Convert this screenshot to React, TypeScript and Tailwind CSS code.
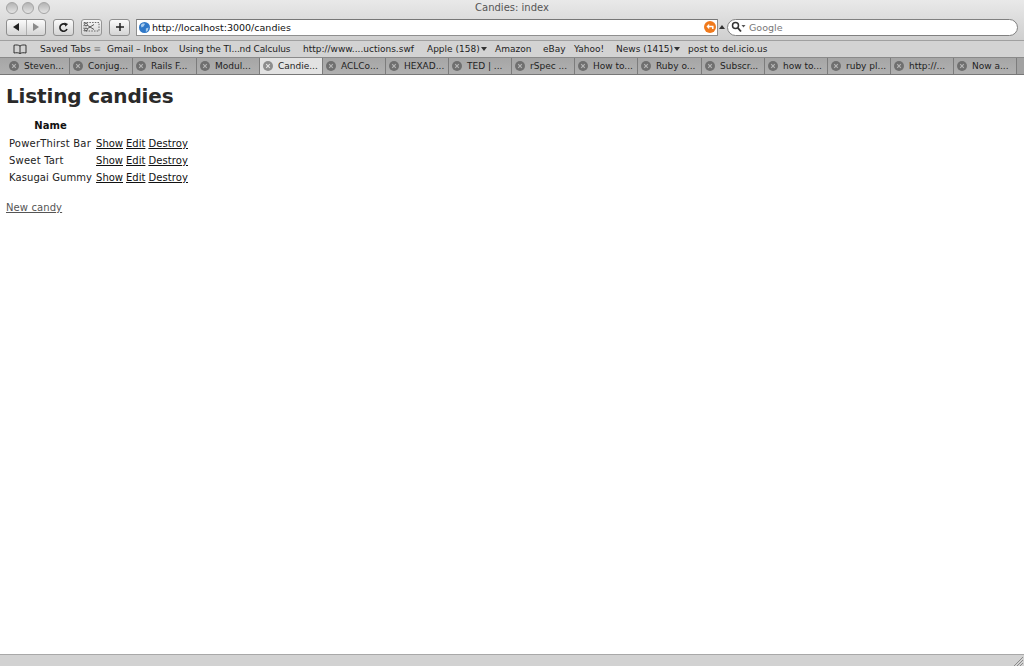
const uiFont = "font-['DejaVu_Sans','Liberation_Sans',sans-serif]";

const bookmarks = [
  { label: "Gmail – Inbox", w: "w-[72px]" },
  { label: "Using the TI...nd Calculus", w: "w-[124px] tracking-[-0.12px]" },
  { label: "http://www....uctions.swf", w: "w-[124px]" },
  { label: "Apple (158)", w: "w-[68px]", menu: true },
  { label: "Amazon", w: "w-[48px]" },
  { label: "eBay", w: "w-[31px]" },
  { label: "Yahoo!", w: "w-[42px]" },
  { label: "News (1415)", w: "w-[72px]", menu: true },
  { label: "post to del.icio.us", w: "w-[90px]" },
];

const tabs = [
  "Steven...", "Conjug...", "Rails F...", "Modul...", "Candie...", "ACLCo...", "HEXAD...", "TED | ...",
  "rSpec ...", "How to...", "Ruby o...", "Subscr...", "how to...", "ruby pl...", "http://...", "Now a...",
];

const candies = [
  { name: "PowerThirst Bar", spacing: "tracking-[0.2px]" },
  { name: "Sweet Tart", spacing: "tracking-[0.2px]" },
  { name: "Kasugai Gummy", spacing: "tracking-[0.08px]" },
];

function Light() {
  return <span className="w-[12px] h-[12px] rounded-full bg-gradient-to-b from-[#b4b4b4] to-[#e4e4e4] border border-[#a4a4a4]" />;
}

function ToolButton({ className, children }: { className: string; children: React.ReactNode }) {
  return (
    <div className={`h-[17px] shrink-0 flex items-center justify-center rounded-[3px] border border-[#8e8e8e] bg-gradient-to-b from-[#fbfbfb] to-[#d4d4d4] ${className}`}>
      {children}
    </div>
  );
}

function TabClose({ dark }: { dark?: boolean }) {
  return (
    <svg width="10" height="10" viewBox="0 0 10 10" className="shrink-0">
      <circle cx="5" cy="5" r="5" fill={dark ? "#6f6f6f" : "#8d8d8d"} />
      <path d="M3.2 3.2l3.6 3.6M6.8 3.2l-3.6 3.6" stroke={dark ? "#b5b5b5" : "#e2e2e2"} strokeWidth="1.2" />
    </svg>
  );
}

export default function App() {
  return (
    <div className={`w-[1024px] h-[666px] flex flex-col overflow-hidden bg-white ${uiFont}`}>
      {/* Title bar and toolbar */}
      <div className="h-[41px] shrink-0 bg-gradient-to-b from-[#e9e9e9] to-[#cfcfcf] border-b border-[#a0a0a0]">
        <div className="h-[16px] relative flex items-center pl-[6px] gap-[4px]">
          <Light />
          <Light />
          <Light />
          <span className="absolute left-0 right-0 text-center text-[10px] leading-[16px] text-[#555]">Candies: index</span>
        </div>
        <div className="h-[22px] flex items-center pl-[6px] pr-[6px]">
          <ToolButton className="w-[40px] mr-[7px]">
            <div className="flex-1 h-full flex items-center justify-center border-r border-[#b0b0b0]">
              <svg width="8" height="8" viewBox="0 0 8 8"><path d="M1 4l6-4v8z" fill="#222" /></svg>
            </div>
            <div className="flex-1 flex items-center justify-center">
              <svg width="8" height="8" viewBox="0 0 8 8"><path d="M7 4L1 0v8z" fill="#8a8a8a" /></svg>
            </div>
          </ToolButton>
          <ToolButton className="w-[21px] mr-[7px]">
            <svg width="11" height="11" viewBox="0 0 12 12" fill="none">
              <path d="M9.8 7.6A4 4 0 1 1 8.6 2.9" stroke="#222" strokeWidth="1.8" />
              <path d="M7 0.5l4 1.8-3 3z" fill="#222" />
            </svg>
          </ToolButton>
          <ToolButton className="w-[21px] mr-[7px] opacity-90">
            <svg width="17" height="12" viewBox="0 0 17 12" fill="none" stroke="#3a3a3a">
              <rect x="1" y="1.5" width="15" height="8.5" strokeDasharray="1.5 1.2" strokeWidth="0.8" />
              <circle cx="3" cy="3.5" r="1.4" strokeWidth="0.9" />
              <circle cx="3" cy="8.5" r="1.4" strokeWidth="0.9" />
              <path d="M4.2 4.2L11 8.5M4.2 7.8L11 3.5" strokeWidth="0.9" />
            </svg>
          </ToolButton>
          <ToolButton className="w-[21px] mr-[6px]">
            <svg width="10" height="10" viewBox="0 0 10 10"><path d="M5 1v8M1 5h8" stroke="#222" strokeWidth="1.5" /></svg>
          </ToolButton>

          {/* Address field */}
          <div className="w-[582px] h-[17px] shrink-0 flex items-center bg-white border border-[#8f8f8f] border-t-[#777] pl-[2px] pr-[1px]">
            <svg width="11" height="11" viewBox="0 0 12 12" className="shrink-0">
              <circle cx="6" cy="6" r="6" fill="#2f78c8" />
              <path d="M2 3.5c1.5-2 3.5-2 4.5-1.4L5 5 2.800 6z" fill="#a9cdee" />
              <path d="M7.500 7l3-1-1 3.500-2 1.500z" fill="#a9cdee" />
            </svg>
            <span className="ml-[2px] flex-1 text-[9.5px] leading-[15px] text-[#111]">http://localhost:3000/candies</span>
            <svg width="12" height="12" viewBox="0 0 12 12" fill="none" className="shrink-0">
              <circle cx="6" cy="6" r="6" fill="#f07a1c" />
              <path d="M8.800 8V5.500H4" stroke="#fff" strokeWidth="1.500" />
              <path d="M5.200 2.800L2.500 5.500l2.700 2.700z" fill="#fff" />
            </svg>
          </div>
          <svg width="6" height="4" viewBox="0 0 6 4" className="ml-[1px] mr-[2px] shrink-0"><path d="M3 0l3 4H0z" fill="#333" /></svg>
          {/* Search field */}
          <div className="w-[291px] h-[17px] shrink-0 flex items-center rounded-full bg-white border border-[#808080] pl-[3px]">
            <svg width="15" height="12" viewBox="0 0 15 12" fill="none" className="shrink-0">
              <circle cx="4.500" cy="4.500" r="3" stroke="#333" strokeWidth="1.500" />
              <path d="M6.800 6.800L10 10.500" stroke="#333" strokeWidth="1.800" />
              <path d="M10.500 4h4l-2 2.500z" fill="#555" />
            </svg>
            <span className="ml-[3px] text-[9.5px] leading-[15px] text-[#777]">Google</span>
          </div>
        </div>
      </div>

      {/* Bookmarks bar */}
      <div className="h-[16px] shrink-0 flex items-center bg-[#d3d3d3] text-[9px] leading-[16px] text-[#222]">
        <svg width="14" height="10" viewBox="0 0 14 10" fill="none" stroke="#222" strokeWidth="0.900" className="ml-[13px] mr-[13px] shrink-0">
          <path d="M7 2C5.500 0.800 3 0.800 1 1.200V9C3 8.600 5.500 8.600 7 9.500C8.500 8.600 11 8.600 13 9V1.200C11 0.800 8.500 0.800 7 2ZM7 2V9.500" />
        </svg>
        <span className="w-[67px] whitespace-nowrap">Saved Tabs <span className="text-[#888]">≡</span></span>
        {bookmarks.map((b) => (
          <span key={b.label} className={`${b.w} shrink-0 flex items-center whitespace-nowrap`}>
            {b.label}
            {b.menu && (
              <svg width="6" height="4" viewBox="0 0 6 4" className="ml-[1px]"><path d="M0 0h6L3 4z" fill="#333" /></svg>
            )}
          </span>
        ))}
      </div>

      {/* Tab strip */}
      <div className="h-[18px] shrink-0 flex bg-[#a2a2a2] border-t border-[#8a8a8a] border-b border-b-[#777] text-[9px] leading-[16px] text-[#222]">
        {tabs.map((t, i) => (
          <div
            key={t}
            className={`${i === 0 ? "w-[70px] pl-[9px]" : i === 2 || i === 10 ? "w-[64px] pl-[3px]" : "w-[63px] pl-[3px]"} h-full shrink-0 flex items-center gap-[5px] whitespace-nowrap overflow-hidden border-r border-[#7c7c7c] ${
              i === 4 ? "bg-[#e2e2e2]" : "bg-gradient-to-b from-[#a6a6a6] to-[#b0b0b0]"
            }`}
          >
            <TabClose dark={i !== 4} />
            <span>{t}</span>
          </div>
        ))}
      </div>

      {/* Page */}
      <div className="flex-1 min-h-0 pl-[6px] pt-[8px] text-[10px] text-[#222]">
        <h1 className="text-[20px] leading-[27px] font-bold tracking-[-0.15px] text-[#2a2a2a]">Listing candies</h1>
        <table className="mt-[5px] border-separate border-spacing-[2px] leading-[13px]">
          <thead>
            <tr>
              <th className="px-px py-[2px] text-center font-bold text-[#111]">Name</th>
            </tr>
          </thead>
          <tbody>
            {candies.map((c) => (
              <tr key={c.name}>
                <td className={`p-px whitespace-nowrap ${c.spacing}`}>{c.name}</td>
                <td className="py-px pl-px pr-0"><a className="underline text-[#111]" href="#">Show</a></td>
                <td className="py-px pl-px pr-0"><a className="underline text-[#111]" href="#">Edit</a></td>
                <td className="p-px tracking-[0.1px]"><a className="underline text-[#111]" href="#">Destroy</a></td>
              </tr>
            ))}
          </tbody>
        </table>
        <a className="block mt-[13px] underline text-[#555] leading-[15px] tracking-[0.1px]" href="#">New candy</a>
      </div>

      {/* Status bar */}
      <div className="h-[12px] shrink-0 relative bg-[#d2d2d2] border-t border-[#a8a8a8]">
        <svg width="10" height="10" viewBox="0 0 10 10" className="absolute right-[1px] bottom-0">
          <path d="M10 1L1 10M10 4L4 10M10 7L7 10" stroke="#8a8a8a" strokeWidth="1" />
        </svg>
      </div>
    </div>
  );
}
